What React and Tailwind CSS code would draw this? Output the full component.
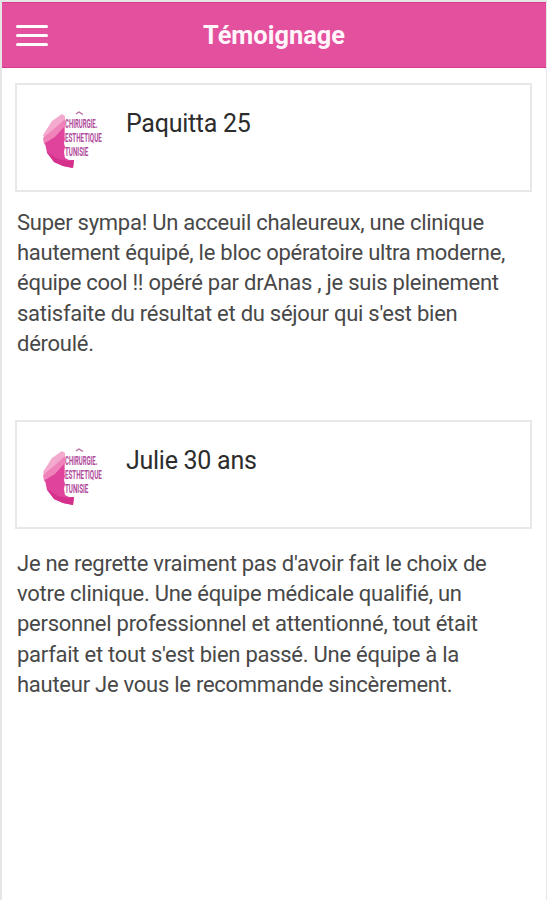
import React from 'react';

const testimonials = [
  {
    id: 1,
    name: 'Paquitta 25',
    lines: [
      'Super sympa! Un acceuil chaleureux, une clinique',
      'hautement équipé, le bloc opératoire ultra moderne,',
      'équipe cool !! opéré par drAnas , je suis pleinement',
      "satisfaite du résultat et du séjour qui s'est bien",
      'déroulé.',
    ],
  },
  {
    id: 2,
    name: 'Julie 30 ans',
    lines: [
      "Je ne regrette vraiment pas d'avoir fait le choix de",
      'votre clinique. Une équipe médicale qualifié, un',
      'personnel professionnel et attentionné, tout était',
      "parfait et tout s'est bien passé. Une équipe à la",
      'hauteur Je vous le recommande sincèrement.',
    ],
  },
];

const ClinicLogo = () => (
  <svg viewBox="0 0 90 80" className="h-[80px] w-[90px] shrink-0">
    <path d="M32 14 L22 21 L13 35 L16 42 L35 28 L35 16 Z" fill="#f4a9cf" />
    <path d="M35 19 L24 29 L13 38 L14 44 L19 48 L35 36 Z" fill="#ee82b9" />
    <path d="M34 27 L25 37 L15 43 L17 53 L24 62 L33 66 L43 68 L44 60 L39 60 L35 58 L34 52 L35 47 L34 43 L35 39 L34 35 Z" fill="#df439b" />
    <path d="M17 52 L24 62 L33 66 L43 68 L44 60 L38 61 L28 59 Z" fill="#d6308d" />
    <path d="M46 14 L49 12 L53 14.500" fill="none" stroke="#b5669f" strokeWidth="1.200" />
    <g fill="#b04a9b" fontFamily="Roboto, sans-serif" fontWeight="700">
      <text transform="translate(35 27.5) scale(0.5 1)" fontSize="12">CHIRURGIE.</text>
      <text transform="translate(35 41.5) scale(0.48 1)" fontSize="13">ESTHETIQUE</text>
      <text transform="translate(35 56) scale(0.48 1)" fontSize="13">TUNISIE</text>
    </g>
  </svg>
);

const Header = () => (
  <header className="relative flex h-[66px] items-center justify-center border-y border-[#d93a8d] bg-[#e3509e]">
    <button aria-label="Menu" className="absolute left-[14px] top-[22px] flex flex-col gap-[6px]">
      <span className="h-[3px] w-8 rounded-full bg-white" />
      <span className="h-[3px] w-8 rounded-full bg-white" />
      <span className="h-[3px] w-8 rounded-full bg-white" />
    </button>
    <h1 className="text-[25.4px] font-bold text-[#fff5fa]">Témoignage</h1>
  </header>
);

const Testimonial = ({ item, children }) => (
  <article>
    <div className="ml-[13px] mr-[14px] flex h-[109px] border-2 border-[#e8e8e8] pl-[13px] pt-[15px]">
      <ClinicLogo />
      <h2 className="ml-[6px] mt-[9px] text-[25px] leading-[30px] tracking-[-0.27px] text-[#2c2c2c]">{item.name}</h2>
    </div>
    {children}
  </article>
);

const Comment = ({ lines }) => (
  <p className="ml-[15px] text-[22px] leading-[30.2px] tracking-[-0.26px] text-[#484848]">
    {lines.map((line) => (
      <span key={line} className="block whitespace-nowrap">{line}</span>
    ))}
  </p>
);

const App = () => {
  return (
    <div className="h-[900px] w-[547px] overflow-hidden border-l-2 border-r border-t-2 border-[#e6e6e6] bg-white font-[Roboto,sans-serif]">
      <Header />
      <main className="flex flex-col pt-[15px]">
        <div className="h-[337px]">
          <Testimonial item={testimonials[0]}>
            <div className="pt-[16px]">
              <Comment lines={testimonials[0].lines} />
            </div>
          </Testimonial>
        </div>
        <Testimonial item={testimonials[1]}>
          <div className="pt-[20px]">
            <Comment lines={testimonials[1].lines} />
          </div>
        </Testimonial>
      </main>
    </div>
  );
};

export default App;
